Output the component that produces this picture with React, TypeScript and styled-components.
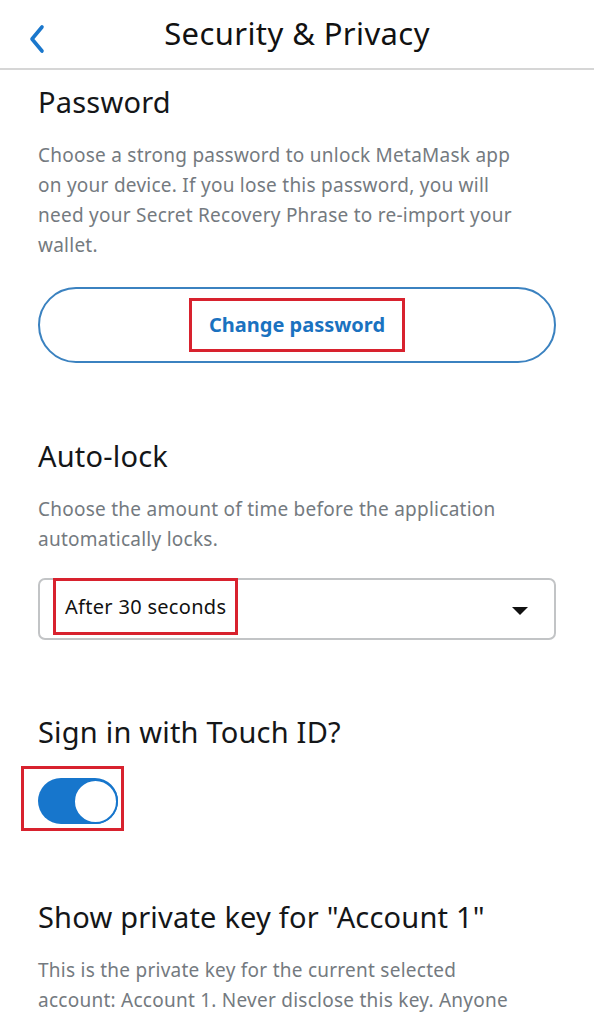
import React from "react";
import styled, { createGlobalStyle } from "styled-components";

const Global = createGlobalStyle`
  html, body { margin: 0; padding: 0; background: #fff; }
  body { font-family: "Noto Sans", "Liberation Sans", sans-serif; color: #141618; }
`;

const Page = styled.div`
  width: 594px;
  height: 1024px;
  overflow: hidden;
  background: #fff;
`;

const Header = styled.header`
  position: relative;
  height: 68px;
  border-bottom: 2px solid #d6d6d6;
  display: flex;
  align-items: center;
  justify-content: center;
`;

const BackButton = styled.button`
  position: absolute;
  left: 22px;
  top: 20px;
  width: 30px;
  height: 38px;
  border: 0;
  background: none;
  padding: 0;
  display: flex;
  align-items: center;
  justify-content: center;
`;

const Title = styled.h1`
  margin: -3px 0 0 0;
  font-size: 31px;
  font-weight: 400;
  letter-spacing: 0.4px;
  line-height: 36px;
  color: #111;
`;

const Content = styled.main`
  padding: 0 38px;
  display: flex;
  flex-direction: column;
`;

const Section = styled.section<{ $top: number }>`
  margin-top: ${(p) => p.$top}px;
  display: flex;
  flex-direction: column;
`;

const Heading = styled.h2`
  margin: 0;
  font-size: 29px;
  font-weight: 400;
  letter-spacing: 0.2px;
  line-height: 36px;
  color: #141618;
`;

const Desc = styled.p`
  margin: 20px 0 0;
  font-size: 19px;
  letter-spacing: 0.25px;
  line-height: 30px;
  color: #747a80;
`;

const PillButton = styled.button`
  margin-top: 27px;
  height: 76px;
  border: 2px solid #3b82c0;
  border-radius: 38px;
  background: #fff;
  display: flex;
  align-items: center;
  justify-content: center;
  padding: 0;
`;

const Highlight = styled.span<{ $pad: string }>`
  border: 3px solid #d8222e;
  padding: ${(p) => p.$pad};
  display: inline-flex;
  align-items: center;
`;

const ButtonLabel = styled.span`
  font-family: "Noto Sans", sans-serif;
  font-weight: 700;
  font-size: 20px;
  line-height: 40px;
  color: #1a72c0;
`;

const Select = styled.div`
  box-sizing: border-box;
  margin-top: 24px;
  height: 62px;
  border: 2px solid #c2c4c6;
  border-radius: 7px;
  display: flex;
  align-items: flex-start;
  justify-content: space-between;
  padding: 0 26px 0 13px;
`;

const SelectCell = styled.div`
  margin-top: -2px;
`;

const SelectValue = styled.span`
  font-size: 20px;
  letter-spacing: 0.3px;
  color: #111;
  line-height: 51px;
`;

const Caret = styled.svg`
  margin-top: 27px;
`;

const ToggleWrap = styled.div`
  margin-top: 16px;
  margin-left: -17px;
  align-self: flex-start;
`;

const Track = styled.div`
  width: 80px;
  height: 46px;
  border-radius: 23px;
  background: #1776cc;
  display: flex;
  align-items: center;
  justify-content: flex-end;
`;

const Knob = styled.div`
  width: 41px;
  height: 41px;
  border-radius: 50%;
  background: #fff;
  border: 2.5px solid #1776cc;
  box-sizing: content-box;
`;

export default function App() {
  return (
    <Page>
      <Global />
      <Header>
        <BackButton aria-label="Back">
          <svg width="20" height="30" viewBox="0 0 20 30">
            <polyline
              points="15,3 5,15 15,27"
              fill="none"
              stroke="#1a77cc"
              strokeWidth="3.6"
              strokeLinecap="round"
              strokeLinejoin="round"
            />
          </svg>
        </BackButton>
        <Title>Security &amp; Privacy</Title>
      </Header>
      <Content>
        <Section $top={14}>
          <Heading>Password</Heading>
          <Desc>
            Choose a strong password to unlock MetaMask app
            <br />
            on your device. If you lose this password, you will
            <br />
            need your Secret Recovery Phrase to re-import your
            <br />
            wallet.
          </Desc>
          <PillButton>
            <Highlight $pad="4px 17px">
              <ButtonLabel>Change password</ButtonLabel>
            </Highlight>
          </PillButton>
        </Section>
        <Section $top={75}>
          <Heading>Auto-lock</Heading>
          <Desc>
            Choose the amount of time before the application
            <br />
            automatically locks.
          </Desc>
          <Select>
            <SelectCell>
              <Highlight $pad="0 9px">
                <SelectValue>After 30 seconds</SelectValue>
              </Highlight>
            </SelectCell>
            <Caret width="16" height="8" viewBox="0 0 16 8">
              <polygon points="0,0 16,0 8,8" fill="#111" />
            </Caret>
          </Select>
        </Section>
        <Section $top={74}>
          <Heading>Sign in with Touch ID?</Heading>
          <ToggleWrap>
            <Highlight $pad="9px 3px 4px 14px">
              <Track>
                <Knob />
              </Track>
            </Highlight>
          </ToggleWrap>
        </Section>
        <Section $top={68}>
          <Heading>Show private key for "Account 1"</Heading>
          <Desc>
            This is the private key for the current selected
            <br />
            account: Account 1. Never disclose this key. Anyone
          </Desc>
        </Section>
      </Content>
    </Page>
  );
}
